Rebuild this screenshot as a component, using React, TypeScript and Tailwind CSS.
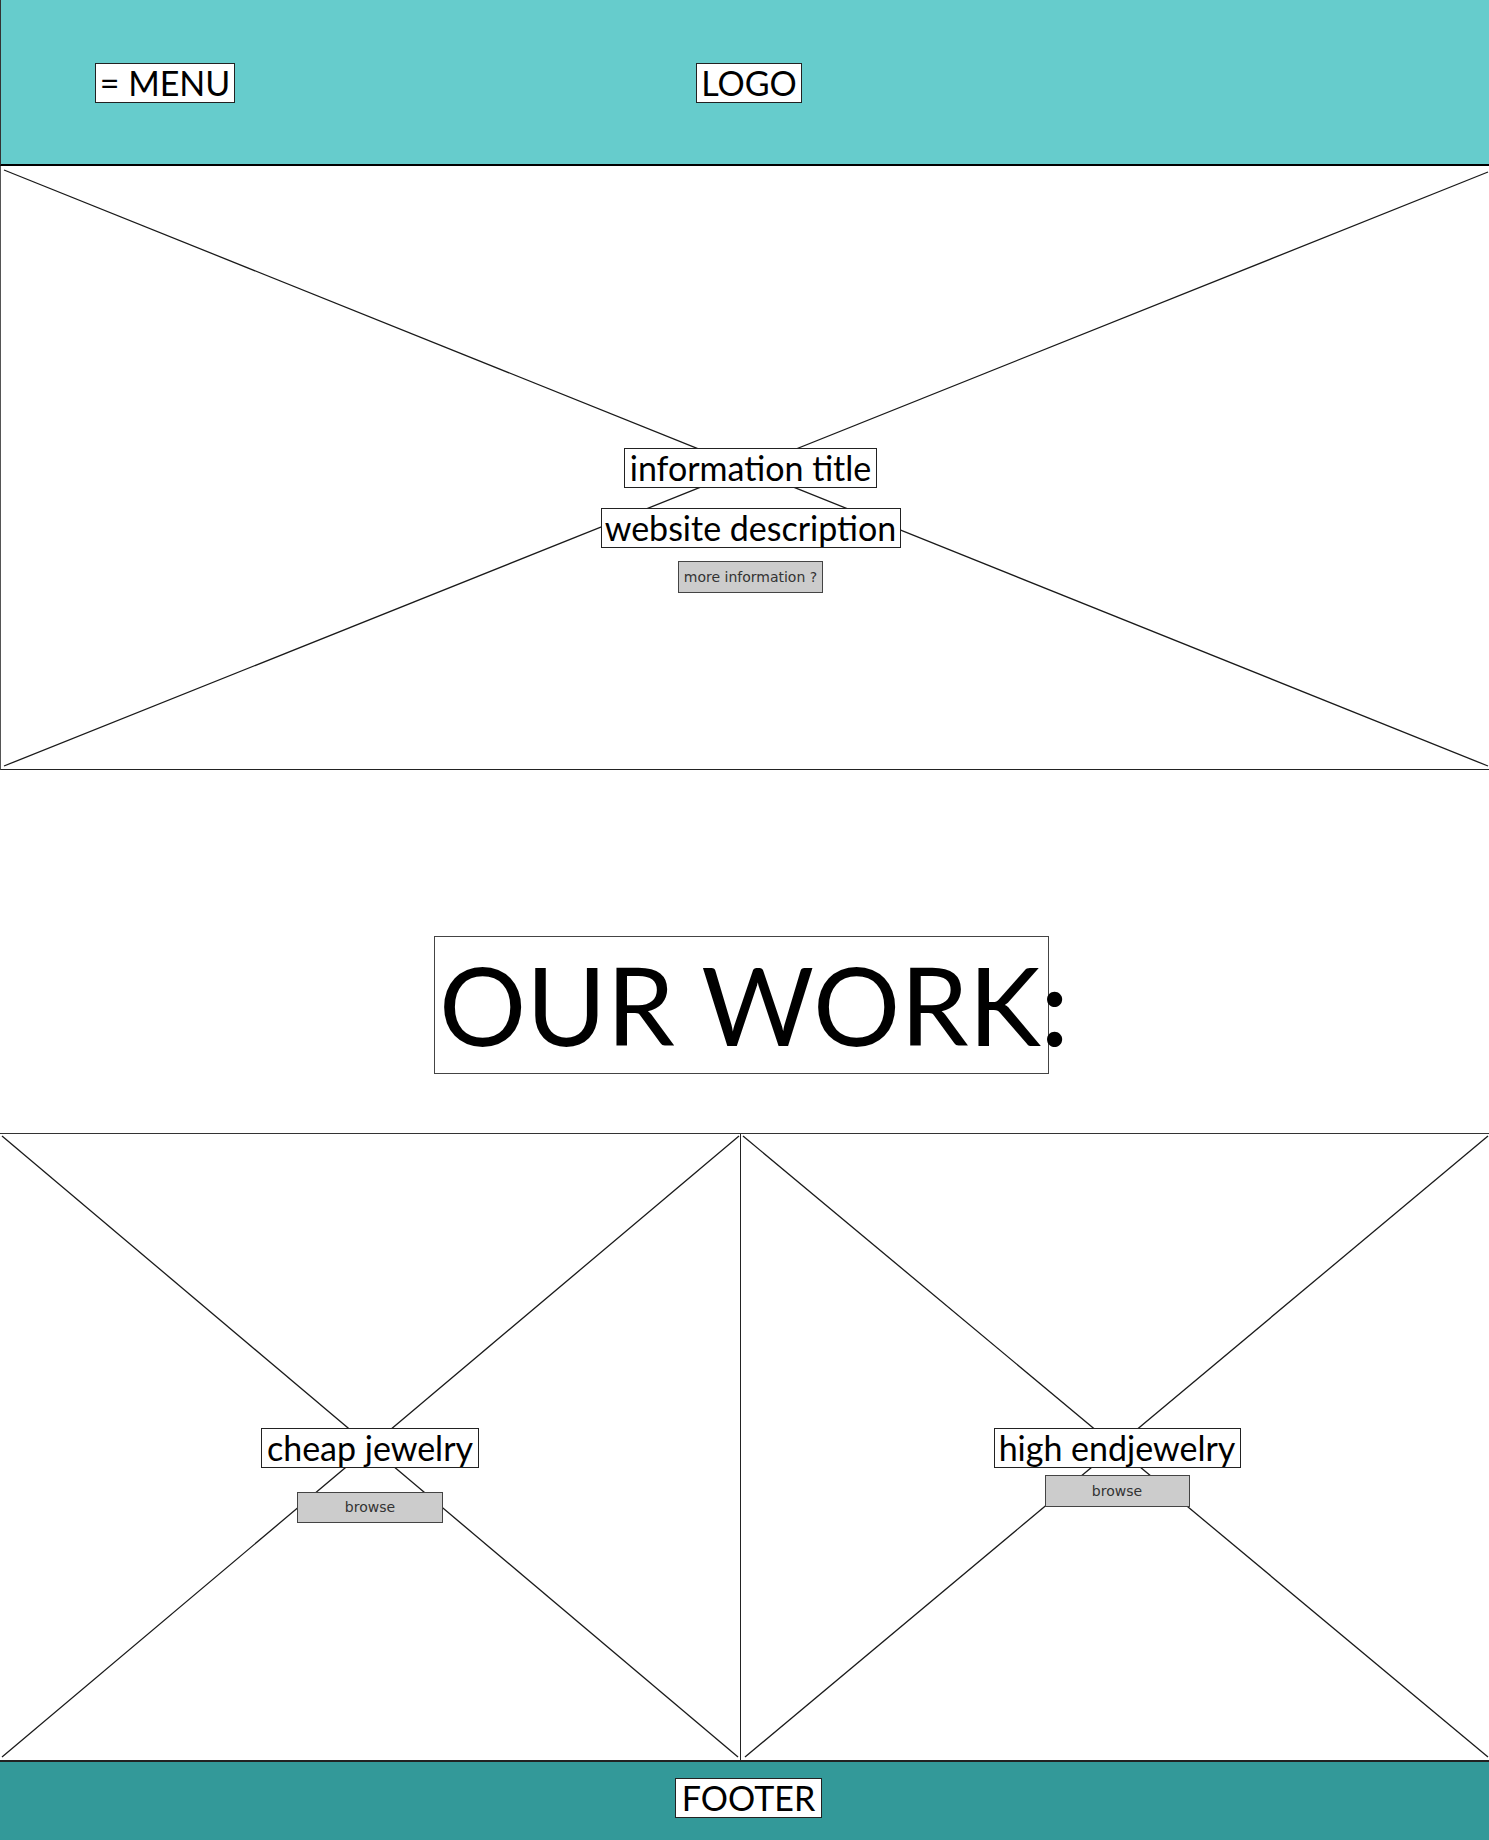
import React from "react";

function XLines({ w, h, lines }: { w: number; h: number; lines: number[][] }) {
  return (
    <svg
      className="absolute inset-0 h-full w-full"
      viewBox={`0 0 ${w} ${h}`}
      preserveAspectRatio="none"
    >
      {lines.map((l, i) => (
        <line
          key={i}
          x1={l[0]}
          y1={l[1]}
          x2={l[2]}
          y2={l[3]}
          stroke="#1a1a1a"
          strokeWidth={1.3}
          vectorEffect="non-scaling-stroke"
        />
      ))}
    </svg>
  );
}

const label =
  "relative bg-white border border-[#222] text-[34px] leading-[38px] text-black whitespace-nowrap text-center";
const btn =
  "relative bg-[#cccccc] border border-[#444] text-[14px] text-[#333] font-['DejaVu_Sans',sans-serif] flex items-center justify-center";

export default function App() {
  return (
    <div className="w-[1489px] h-[1840px] bg-white overflow-hidden font-['Lato',sans-serif]">
      {/* Header */}
      <header className="h-[166px] bg-[#66cccc] border-b-2 border-black border-l border-l-[#333] flex items-start pt-[63px]">
        <div className={`${label} ml-[94px] w-[140px] leading-[37px] text-[33px]`}>= MENU</div>
        <div className={`${label} ml-[461px] w-[106px] leading-[37px]`}>LOGO</div>
      </header>

      {/* Hero */}
      <section className="relative h-[604px] border-l border-[#555] border-b border-b-[#222] flex flex-col items-center pt-[282px] pl-[11px]">
        <XLines
          w={1489}
          h={604}
          lines={[
            [3, 4, 1488, 601],
            [1488, 6, 3, 601],
          ]}
        />
        <div className={`${label} w-[253px]`}>information title</div>
        <div className={`${label} mt-[20px] w-[300px] leading-[37px]`}>website description</div>
        <div className={`${btn} mt-[13px] w-[145px] h-[32px]`}>more information ?</div>
      </section>

      {/* Our work */}
      <section className="h-[363px] pt-[166px]">
        <div className="ml-[434px] w-[615px] h-[138px] border border-[#444] bg-white pl-[4px] text-[109px] leading-[134px] text-black whitespace-nowrap overflow-visible">
          OUR WORK<span className="font-semibold">:</span>
        </div>
      </section>

      {/* Gallery */}
      <section className="grid grid-cols-[741px_1fr] h-[627px] border-t border-[#333]">
        <div className="relative border-r border-[#222] flex flex-col items-center pt-[294px]">
          <XLines
            w={741}
            h={627}
            lines={[
              [2, 2, 739, 624],
              [740, 2, 2, 624],
            ]}
          />
          <div className={`${label} w-[218px] leading-[37px]`}>cheap jewelry</div>
          <div className={`${btn} mt-[24px] w-[146px] h-[31px]`}>browse</div>
        </div>
        <div className="relative flex flex-col items-center pt-[294px] pl-[4px]">
          <XLines
            w={747}
            h={627}
            lines={[
              [2, 2, 746, 624],
              [746, 2, 4, 624],
            ]}
          />
          <div className={`${label} w-[247px] leading-[37px]`}>high endjewelry</div>
          <div className={`${btn} mt-[7px] w-[145px] h-[32px]`}>browse</div>
        </div>
      </section>

      {/* Footer */}
      <footer className="h-[80px] bg-[#339999] border-t-2 border-[#222] pt-[16px]">
        <div className={`${label} ml-[675px] w-[147px] leading-[37px]`}>FOOTER</div>
      </footer>
    </div>
  );
}
